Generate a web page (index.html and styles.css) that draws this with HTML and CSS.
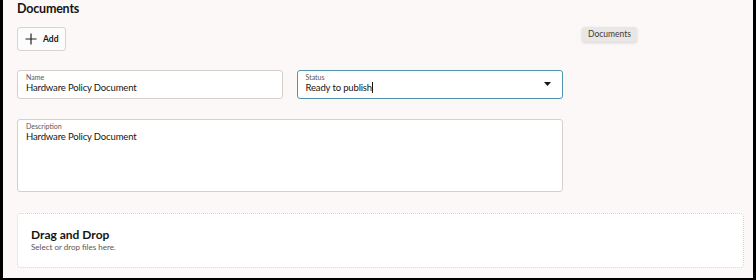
FILE: index.html
```html
<!DOCTYPE html>
<html lang="en">
<head>
<meta charset="utf-8">
<title>Documents</title>
<link rel="stylesheet" href="styles.css">
</head>
<body>
<div class="frame">
  <main class="page">
    <h2 class="title">Documents</h2>
    <button class="add-btn" type="button">
      <svg class="plus" width="12" height="12" viewBox="0 0 12 12" aria-hidden="true"><path d="M6 0.5V11.5M0.5 6H11.5" stroke="#222" stroke-width="1.2" fill="none"/></svg>
      <span>Add</span>
    </button>
    <div class="row">
      <div class="field">
        <span class="label">Name</span>
        <span class="value">Hardware Policy Document</span>
      </div>
      <div class="field field-active">
        <span class="label">Status</span>
        <span class="value">Ready to publish<span class="caret"></span></span>
        <svg class="arrow" width="7" height="4" viewBox="0 0 7 4" aria-hidden="true"><path d="M0 0H7L3.5 4Z" fill="#161513"/></svg>
      </div>
    </div>
    <div class="field field-area">
      <span class="label">Description</span>
      <span class="value">Hardware Policy Document</span>
    </div>
    <section class="drop">
      <h3 class="drop-title">Drag and Drop</h3>
      <p class="drop-hint">Select or drop files here.</p>
    </section>
    <div class="tooltip">Documents</div>
  </main>
</div>
</body>
</html>
```
FILE: styles.css
```css
* { box-sizing: border-box; }
html, body { margin: 0; padding: 0; }
body {
  width: 756px;
  height: 280px;
  background: #000;
  font-family: Lato, "Noto Sans", "Liberation Sans", sans-serif;
  color: #161513;
  overflow: hidden;
}
.frame {
  height: 278px;
  margin: 0 3px 0 3px;
  background: #fcf8f7;
}
.page {
  position: relative;
  height: 100%;
  padding: 1px 9px 0 14px;
  display: flex;
  flex-direction: column;
  align-items: flex-start;
}
.title {
  margin: 0;
  font-size: 12.5px;
  line-height: 16px;
  font-weight: 700;
  letter-spacing: -0.2px;
}
.add-btn {
  margin-top: 10px;
  width: 49px;
  height: 24px;
  display: flex;
  align-items: center;
  gap: 6px;
  padding: 0 0 0 7px;
  background: #fdfcfc;
  border: 1px solid #d6d3d1;
  border-radius: 3px;
  font-family: inherit;
  font-size: 8.5px;
  font-weight: 700;
  color: #161513;
}
.row {
  margin-top: 19px;
  display: flex;
  gap: 14px;
}
.field {
  position: relative;
  width: 266px;
  height: 29px;
  background: #fff;
  border: 1px solid #d3d0cd;
  border-radius: 3px;
  padding: 2px 0 0 8px;
  display: flex;
  flex-direction: column;
}
.field-active {
  border: 1.5px solid #4e97b0;
  padding-left: 7.5px;
}
.label {
  font-size: 7px;
  line-height: 8px;
  color: #5b5652;
}
.value {
  font-size: 9.5px;
  line-height: 13px;
  letter-spacing: -0.15px;
  color: #161513;
}
.caret {
  display: inline-block;
  width: 1px;
  height: 11px;
  background: #161513;
  vertical-align: -2px;
}
.arrow {
  position: absolute;
  right: 11px;
  top: 11px;
}
.field-area {
  margin-top: 20px;
  width: 546px;
  height: 73px;
}
.drop {
  margin-top: 21px;
  width: 727px;
  height: 55px;
  background: #fff;
  border: 1px dotted #d6d4d3;
  border-radius: 4px;
  padding: 13px 0 0 13px;
}
.drop-title {
  margin: 0;
  font-size: 12px;
  line-height: 15px;
  font-weight: 700;
}
.drop-hint {
  margin: 1px 0 0;
  font-size: 8px;
  line-height: 9px;
  color: #5b5652;
}
.tooltip {
  position: absolute;
  left: 579px;
  top: 27px;
  height: 15px;
  padding: 0 6px;
  background: #e9e7e6;
  border-radius: 3px;
  box-shadow: 0 1px 3px rgba(0,0,0,0.15);
  font-size: 8.5px;
  line-height: 15px;
  color: #3d3a38;
}
```
